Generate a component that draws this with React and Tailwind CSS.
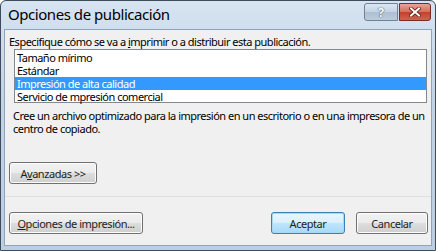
import React from 'react';

const font = "font-['Noto_Sans','DejaVu_Sans',sans-serif]";

function Btn({ children, wide, def }) {
  return (
    <button
      className={`h-[22px] rounded-[3px] border whitespace-nowrap text-[11px] tracking-[-0.45px] text-[#1e1e1e] leading-none ${wide} ${
        def
          ? 'border-[#3c7fb1] bg-[linear-gradient(#eaf6fd_0%,#d9f0fc_50%,#bee6fd_51%,#a7d9f5_100%)] shadow-[inset_0_0_0_1px_#a6d9f4]'
          : 'border-[#707070] bg-[linear-gradient(#f2f2f2_0%,#ebebeb_50%,#dddddd_51%,#cfcfcf_100%)] shadow-[inset_0_0_0_1px_#fcfcfc]'
      }`}
    >
      {children}
    </button>
  );
}

export default function App() {
  const rows = ['Tamaño mírimo', 'Estándar', 'Impresión de alta calidad', 'Servicio de mpresión comercial'];

  return (
    <div className={`w-[436px] h-[251px] flex flex-col border border-[#3f4b5c] rounded-t-[6px] bg-[linear-gradient(#d6e3f1,#c2d3e6_40%,#bccee2)] ${font}`}>
      {/* Title bar */}
      <div className="h-[28px] flex items-start justify-between pl-[7px] pr-[4px]">
        <span className="mt-[3px] text-[15px] leading-[20px] text-black tracking-[-0.45px]">Opciones de publicación</span>
        <div className="flex mt-[2px] gap-[1px]">
          <div className="w-[34px] h-[18px] rounded-l-[3px] border border-[#6e8298] bg-[linear-gradient(#dbe6f2,#c3d3e4_50%,#aebfd3_51%,#bccbdd)] flex items-center justify-center">
            <span className="text-[13px] font-bold leading-none text-white [text-shadow:0_0_1px_#2f3f55,0_0_1px_#2f3f55]">?</span>
          </div>
          <div className="w-[32px] h-[18px] rounded-r-[3px] border border-[#7a2b22] bg-[linear-gradient(#e8a395,#d46d5a_50%,#c3412c_51%,#d0634c)] flex items-center justify-center">
            <svg width="12" height="10" viewBox="0 0 12 10">
              <path d="M2 1.5 L10 8.5 M10 1.5 L2 8.5" stroke="#5a1a12" strokeWidth="3.6" strokeLinecap="square" />
              <path d="M2 1.5 L10 8.5 M10 1.5 L2 8.5" stroke="#ffffff" strokeWidth="2" strokeLinecap="square" />
            </svg>
          </div>
        </div>
      </div>

      {/* Dialog body */}
      <div className="flex-1 mx-[3px] mb-[4px] border border-[#8ea3bc] bg-[#f0f0f0] flex flex-col pl-[4px] pr-[3px] pt-[4px] text-[11px] tracking-[-0.5px] text-black">
        <p className="h-[15px] leading-[15px] whitespace-nowrap">
          Especifique cómo se va a <span className="underline">i</span>mprimir o a distribuir esta publicación.
        </p>
        <div className="ml-[5px] w-[413px] h-[54px] border border-[#828790] bg-white py-[1px]">
          {rows.map((r, i) => (
            <div
              key={r}
              className={`h-[13px] leading-[13px] pl-[2px] whitespace-nowrap ${i === 2 ? 'bg-[#3399ff] text-white' : ''}`}
            >
              {r}
            </div>
          ))}
        </div>
        <p className="ml-[4px] mt-[6px] leading-[13px] whitespace-nowrap">
          Cree un archivo optimizado para la impresión en un escritorio o en una impresora de un
          <br />
          centro de copiado.
        </p>
        <div className="mt-[27px]">
          <Btn wide="w-[88px]">
            A<span className="underline">v</span>anzadas &gt;&gt;
          </Btn>
        </div>
        <div className="mt-[12px] -ml-[4px] -mr-[3px] h-px bg-[#dfdfdf]" />
        <div className="mt-[15px] flex items-center">
          <Btn wide="w-[134px]">
            <span className="underline">O</span>pciones de impresión...
          </Btn>
          <div className="flex-1" />
          <Btn wide="w-[74px]" def>
            Aceptar
          </Btn>
          <div className="w-[11px]" />
          <Btn wide="w-[72px]">Cancelar</Btn>
        </div>
      </div>
    </div>
  );
}
